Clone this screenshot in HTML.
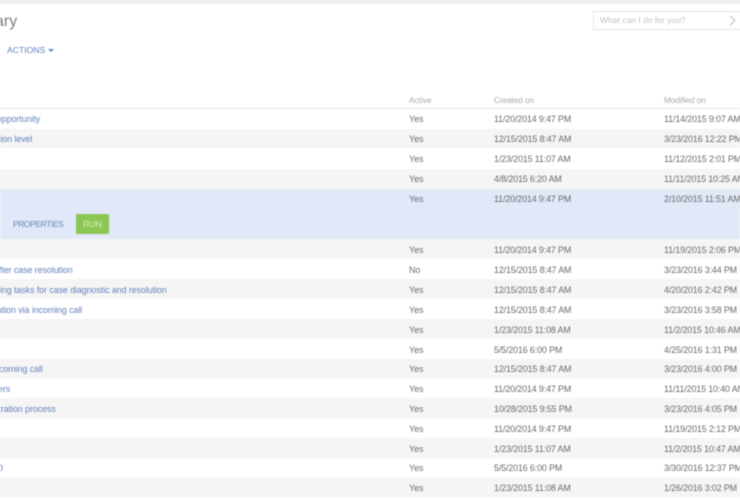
<!DOCTYPE html>
<html><head><meta charset="utf-8">
<style>
html,body{margin:0;padding:0;background:#fff}
#p{position:relative;width:740px;height:500px;overflow:hidden;background:#fff;font-family:"Liberation Sans",sans-serif;font-size:8.9px;color:#6b6b6b;filter:blur(.4px)}
#p div{position:absolute;white-space:nowrap}
.b{left:0;width:740px}
.g{background:#f5f5f5}
.r{left:0;width:740px;height:20px;line-height:20px}
.r span{position:absolute;top:0;white-space:nowrap}
.n{color:#6482bb;letter-spacing:-.07px}
.a{left:409px}
.c{left:494px;letter-spacing:-.12px}
.m{left:664px;letter-spacing:-.12px}
.h{color:#a8a8a8;font-size:8.3px}
</style></head><body>
<div id="p">
<div class="b" style="top:0;height:4px;background:#ececec"></div>
<div style="left:-5px;top:11px;font-size:16px;line-height:22px;color:#808080">ary</div>
<div style="left:7px;top:44px;line-height:13px;font-size:8.6px;color:#6482bb">ACTIONS</div>
<div style="left:48px;top:49px;width:0;height:0;border-left:3px solid transparent;border-right:3px solid transparent;border-top:3px solid #6482bb"></div>
<div style="left:593px;top:11px;width:160px;height:17px;border:1px solid #e4e4e4;box-sizing:content-box"></div>
<div style="left:600px;top:14px;line-height:13px;color:#c2c2c2;font-size:8.5px">What can I do for you?</div>
<svg style="position:absolute;left:728px;top:15px" width="10" height="11" viewBox="0 0 10 11"><path d="M2 1l5 4.5L2 10" fill="none" stroke="#b8b8b8" stroke-width="1"/></svg>
<div class="b" style="top:108px;height:1px;background:#e8e8e8"></div>
<div class="r h" style="top:90px"><span class="a">Active</span><span class="c">Created on</span><span class="m">Modified on</span></div>

<div class="b g" style="top:129px;height:19px"></div>
<div class="b g" style="top:169px;height:20px"></div>
<div class="b" style="top:189px;height:50px;background:#e1e8f8"></div>
<div class="b g" style="top:239px;height:20px"></div>
<div class="b g" style="top:279px;height:20px"></div>
<div class="b g" style="top:319px;height:20px"></div>
<div class="b g" style="top:359px;height:19px"></div>
<div class="b g" style="top:398px;height:20px"></div>
<div class="b g" style="top:438px;height:20px"></div>
<div class="b g" style="top:478px;height:19px"></div>

<div class="r" style="top:109px"><span class="n" style="left:-3px">opportunity</span><span class="a">Yes</span><span class="c">11/20/2014 9:47 PM</span><span class="m">11/14/2015 9:07 AM</span></div>
<div class="r" style="top:129px"><span class="n" style="left:-2px">tion level</span><span class="a">Yes</span><span class="c">12/15/2015 8:47 AM</span><span class="m">3/23/2016 12:22 PM</span></div>
<div class="r" style="top:149px"><span class="a">Yes</span><span class="c">1/23/2015 11:07 AM</span><span class="m">11/12/2015 2:01 PM</span></div>
<div class="r" style="top:169px"><span class="a">Yes</span><span class="c">4/8/2015 6:20 AM</span><span class="m">11/11/2015 10:25 AM</span></div>
<div class="r" style="top:189px"><span class="a">Yes</span><span class="c">11/20/2014 9:47 PM</span><span class="m">2/10/2015 11:51 AM</span></div>
<div style="left:13px;top:218px;line-height:13px;font-size:8.4px;letter-spacing:-.35px;color:#6482bb">PROPERTIES</div>
<div style="left:76px;top:214px;width:33px;height:20px;line-height:20px;background:#8bc755;color:#d8efc0;text-align:center;border-radius:1px;font-size:8.6px">RUN</div>
<div class="r" style="top:240px"><span class="a">Yes</span><span class="c">11/20/2014 9:47 PM</span><span class="m">11/19/2015 2:06 PM</span></div>
<div class="r" style="top:260px"><span class="n" style="left:-1px">fter case resolution</span><span class="a">No</span><span class="c">12/15/2015 8:47 AM</span><span class="m">3/23/2016 3:44 PM</span></div>
<div class="r" style="top:280px"><span class="n" style="left:0">ing tasks for case diagnostic and resolution</span><span class="a">Yes</span><span class="c">12/15/2015 8:47 AM</span><span class="m">4/20/2016 2:42 PM</span></div>
<div class="r" style="top:300px"><span class="n" style="left:-3px">ation via incoming call</span><span class="a">Yes</span><span class="c">12/15/2015 8:47 AM</span><span class="m">3/23/2016 3:58 PM</span></div>
<div class="r" style="top:320px"><span class="a">Yes</span><span class="c">1/23/2015 11:08 AM</span><span class="m">11/2/2015 10:46 AM</span></div>
<div class="r" style="top:340px"><span class="a">Yes</span><span class="c">5/5/2016 6:00 PM</span><span class="m">4/25/2016 1:31 PM</span></div>
<div class="r" style="top:359px"><span class="n" style="left:-1px">coming call</span><span class="a">Yes</span><span class="c">12/15/2015 8:47 AM</span><span class="m">3/23/2016 4:00 PM</span></div>
<div class="r" style="top:379px"><span class="n" style="left:-2px">ers</span><span class="a">Yes</span><span class="c">11/20/2014 9:47 PM</span><span class="m">11/11/2015 10:40 AM</span></div>
<div class="r" style="top:399px"><span class="n" style="left:-1.5px">tration process</span><span class="a">Yes</span><span class="c">10/28/2015 9:55 PM</span><span class="m">3/23/2016 4:05 PM</span></div>
<div class="r" style="top:419px"><span class="a">Yes</span><span class="c">11/20/2014 9:47 PM</span><span class="m">11/19/2015 2:12 PM</span></div>
<div class="r" style="top:439px"><span class="a">Yes</span><span class="c">1/23/2015 11:07 AM</span><span class="m">11/2/2015 10:47 AM</span></div>
<div class="r" style="top:458px"><span class="n" style="left:-2px">0</span><span class="a">Yes</span><span class="c">5/5/2016 6:00 PM</span><span class="m">3/30/2016 12:37 PM</span></div>
<div class="r" style="top:478px"><span class="a">Yes</span><span class="c">1/23/2015 11:08 AM</span><span class="m">1/26/2016 3:02 PM</span></div>
</div>
</body></html>
